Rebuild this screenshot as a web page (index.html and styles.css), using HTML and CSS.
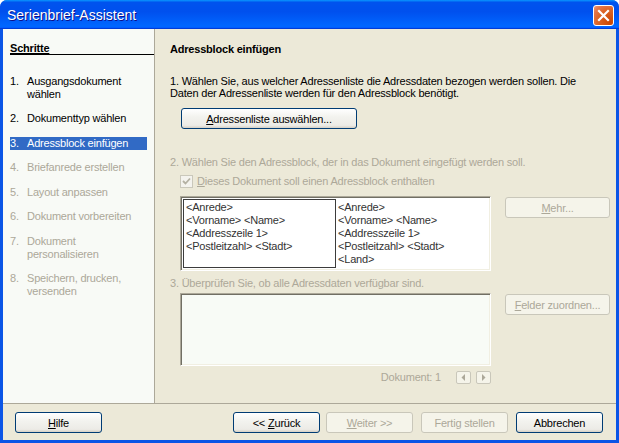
FILE: index.html
```html
<!DOCTYPE html>
<html lang="de">

<head>
    <meta charset="UTF-8">
    <title>Serienbrief-Assistent</title>
    <link rel="stylesheet" href="styles.css">
</head>

<body>
    <div class="window">
        <div class="titlebar">
            <span class="title">Serienbrief-Assistent</span>
            <a class="closeBtn" href="javascript:;">
                <svg width="13" height="13" viewBox="0 0 13 13">
                    <path d="M2 2 L11 11 M11 2 L2 11" stroke="#fff" stroke-width="2.2" stroke-linecap="square"></path>
                </svg>
            </a>
        </div>
        <div class="client">
            <div class="mainWrp">
                <div class="steps">
                    <div class="stepsHead"><u>Schritte</u></div>
                    <ul class="stepList">
                        <li><span class="num">1.</span><span class="txt">Ausgangsdokument<br>wählen</span></li>
                        <li><span class="num">2.</span><span class="txt">Dokumenttyp wählen</span></li>
                        <li class="current"><span class="num">3.</span><span class="txt">Adressblock einfügen</span></li>
                        <li class="off"><span class="num">4.</span><span class="txt">Briefanrede erstellen</span></li>
                        <li class="off"><span class="num">5.</span><span class="txt">Layout anpassen</span></li>
                        <li class="off"><span class="num">6.</span><span class="txt">Dokument vorbereiten</span></li>
                        <li class="off"><span class="num">7.</span><span class="txt">Dokument<br>personalisieren</span></li>
                        <li class="off"><span class="num">8.</span><span class="txt">Speichern, drucken,<br>versenden</span></li>
                    </ul>
                </div>
                <div class="page">
                    <h1>Adressblock einfügen</h1>
                    <p class="intro">1. Wählen Sie, aus welcher Adressenliste die Adressdaten bezogen werden sollen. Die<br>Daten der Adressenliste werden für den Adressblock benötigt.</p>
                    <div class="listBtnRow">
                        <a class="btn listBtn" href="javascript:;"><span><u>A</u>dressenliste auswählen...</span></a>
                    </div>
                    <p class="sectionTxt grey">2. Wählen Sie den Adressblock, der in das Dokument eingefügt werden soll.</p>
                    <div class="checkRow grey">
                        <span class="checkBox">
                            <svg width="9" height="9" viewBox="0 0 9 9">
                                <path d="M1 4 L3.5 6.5 L8 1.5" fill="none" stroke="#b4b1a3" stroke-width="1.8"></path>
                            </svg>
                        </span>
                        <span><u>D</u>ieses Dokument soll einen Adressblock enthalten</span>
                    </div>
                    <div class="fieldRow">
                        <div class="well addrWell">
                            <div class="addrBlock selected">&lt;Anrede&gt;<br>&lt;Vorname&gt; &lt;Name&gt;<br>&lt;Addresszeile 1&gt;<br>&lt;Postleitzahl&gt; &lt;Stadt&gt;</div>
                            <div class="addrBlock">&lt;Anrede&gt;<br>&lt;Vorname&gt; &lt;Name&gt;<br>&lt;Addresszeile 1&gt;<br>&lt;Postleitzahl&gt; &lt;Stadt&gt;<br>&lt;Land&gt;</div>
                        </div>
                        <a class="btn sideBtn disabled" href="javascript:;"><span><u>M</u>ehr...</span></a>
                    </div>
                    <p class="sectionTxt checkTxt grey">3. Überprüfen Sie, ob alle Adressdaten verfügbar sind.</p>
                    <div class="fieldRow">
                        <div class="well previewWell"></div>
                        <a class="btn sideBtn disabled" href="javascript:;"><span><u>F</u>elder zuordnen...</span></a>
                    </div>
                    <div class="pager grey">
                        <span>Dokument: 1</span>
                        <a class="arrBtn" href="javascript:;">
                            <svg width="5" height="7" viewBox="0 0 5 7"><path d="M4 0 L0.5 3.5 L4 7 Z" fill="#aca899"></path></svg>
                        </a>
                        <a class="arrBtn" href="javascript:;">
                            <svg width="5" height="7" viewBox="0 0 5 7"><path d="M1 0 L4.5 3.5 L1 7 Z" fill="#aca899"></path></svg>
                        </a>
                    </div>
                </div>
            </div>
            <div class="footer">
                <a class="btn footBtn" href="javascript:;"><span><u>H</u>ilfe</span></a>
                <div class="footRight">
                    <a class="btn footBtn" href="javascript:;"><span>&lt;&lt; <u>Z</u>urück</span></a>
                    <a class="btn footBtn disabled nextBtn" href="javascript:;"><span><u>W</u>eiter &gt;&gt;</span></a>
                    <a class="btn footBtn disabled finishBtn" href="javascript:;"><span>Fertig stellen</span></a>
                    <a class="btn footBtn cancelBtn" href="javascript:;"><span>Abbrechen</span></a>
                </div>
            </div>
        </div>
    </div>
</body>

</html>
```

FILE: styles.css
```css
* {
    margin: 0;
    padding: 0;
    box-sizing: border-box;
}

body {
    background: #fff;
    font-family: "Liberation Sans", Arial, sans-serif;
    font-size: 11px;
    letter-spacing: -0.2px;
    color: #000;
}

a {
    color: #000;
    text-decoration: none;
}

ul,
li {
    list-style: none;
}

.window {
    width: 619px;
    height: 443px;
    display: flex;
    flex-direction: column;
    background: #0b55e6;
    border-radius: 7px 7px 0 0;
    overflow: hidden;
}

/* title bar */
.titlebar {
    height: 29px;
    display: flex;
    align-items: center;
    padding: 0 5px 0 7px;
    background: linear-gradient(180deg, #0997ff, #0053ee 8%, #0050ee 40%, #0066ff 88%, #0066ff 93%, #005bff 95%, #003dd7 96%, #003dd7);
}

.title {
    flex: 1;
    color: #fff;
    font-size: 14px;
    letter-spacing: 0;
    text-shadow: 1px 1px #0f1089;
    padding-top: 1px;
}

.closeBtn {
    width: 21px;
    height: 21px;
    display: flex;
    align-items: center;
    justify-content: center;
    border: 1px solid #fff;
    border-radius: 3px;
    background: radial-gradient(circle at 85% 85%, #cc4600, #dc6527 55%, #e5764a 80%, #f19a7c);
    margin-top: 2px;
}

/* client area */
.client {
    flex: 1;
    margin: 0 3px 3px;
    display: flex;
    flex-direction: column;
    background: #ece9d8;
}

.mainWrp {
    height: 375px;
    display: flex;
    border-bottom: 1px solid #aca899;
}

/* left: steps */
.steps {
    width: 153px;
    background: #f8faf6;
    border-right: 1px solid #aca899;
    padding: 14px 0 0 7px;
}

.stepsHead {
    font-weight: bold;
    line-height: 11px;
    border-bottom: 1px solid #000;
}

.stepList {
    padding-top: 8px;
    margin-right: 7px;
}

.stepList li {
    display: flex;
    line-height: 13px;
    margin-top: 11.5px;
}

.stepList .num {
    width: 17px;
}

.stepList li.current {
    background: #316ac5;
    color: #fff;
}

.stepList li.off {
    color: #aca899;
}

/* right: page */
.page {
    flex: 1;
    padding: 14px 6px 0 15px;
}

.page h1 {
    font-size: 11px;
    line-height: 13px;
}

.intro {
    margin-top: 19px;
    line-height: 12px;
}

.grey {
    color: #aca899;
}

.listBtnRow {
    margin: 9px 0 0 11px;
}

.btn {
    display: flex;
    align-items: center;
    justify-content: center;
    height: 21px;
    border: 1px solid #003c74;
    border-radius: 3px;
    background: linear-gradient(180deg, #fff, #f3f3ef 40%, #ecebe6 86%, #d6d0c5);
}

.btn.disabled {
    border-color: #c9c7ba;
    background: #f5f4ea;
    color: #aca899;
}

.listBtn {
    width: 176px;
}

.sectionTxt {
    line-height: 13px;
    margin-top: 27px;
}

.checkRow {
    display: flex;
    align-items: center;
    line-height: 13px;
    margin: 6px 0 0 10px;
}

.checkBox {
    width: 13px;
    height: 13px;
    display: flex;
    align-items: center;
    justify-content: center;
    border: 1px solid #cac8bb;
    background: #f4f3ee;
    margin-right: 4px;
}

.fieldRow {
    display: flex;
    align-items: flex-start;
    margin: 8px 0 0 10px;
}

.well {
    width: 311px;
    border: 1px solid;
    border-color: #aca899 #fff #fff #aca899;
    box-shadow: inset 1px 1px 0 #716f64, inset -1px -1px 0 #f1efe2;
}

.addrWell {
    height: 75px;
    display: flex;
    padding: 2px;
    background: #fff;
    color: #333;
}

.addrBlock {
    line-height: 13px;
    padding: 2px 2px 0 2px;
}

.addrBlock.selected {
    width: 153px;
    border: 1px solid #3c3c3c;
    padding-top: 1px;
}

.previewWell {
    height: 73px;
    background: #f8fbf6;
}

.sideBtn {
    width: 105px;
    margin-left: 14px;
    margin-top: 1px;
}

.checkTxt {
    margin-top: 6px;
}

.fieldRow+.checkTxt+.fieldRow {
    margin-top: 3px;
}

.pager {
    width: 311px;
    display: flex;
    justify-content: flex-end;
    align-items: center;
    line-height: 13px;
    margin: 5px 0 0 10px;
}

.pager span {
    margin-right: 10px;
}

.arrBtn {
    width: 15px;
    height: 13px;
    display: flex;
    align-items: center;
    justify-content: center;
    border: 1px solid #c9c7ba;
    border-radius: 2px;
    background: #f5f4ea;
    margin-left: 5px;
}

/* footer */
.footer {
    flex: 1;
    display: flex;
    align-items: flex-start;
    padding: 8px 13px 0 12px;
}

.footBtn {
    width: 87px;
}

.footRight {
    margin-left: auto;
    display: flex;
}

.nextBtn {
    margin-left: 6px;
}

.finishBtn {
    margin-left: 8px;
}

.cancelBtn {
    margin-left: 8px;
}
```
